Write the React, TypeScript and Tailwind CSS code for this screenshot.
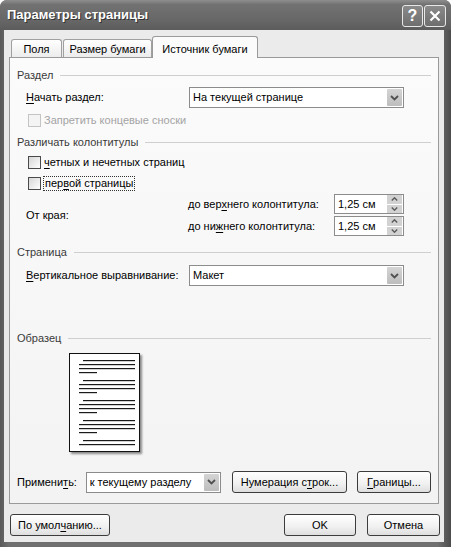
import React from "react";

const U = ({ children }: { children: React.ReactNode }) => (
  <span className="underline underline-offset-[2px] decoration-[1px]">{children}</span>
);

const Chevron = () => (
  <svg width="9" height="6" viewBox="0 0 9 6">
    <path d="M1 1 L4.5 4.5 L8 1" stroke="#505050" strokeWidth="1.8" fill="none" />
  </svg>
);

const Select = ({ text, w }: { text: string; w: string }) => (
  <div className={`flex h-[21px] ${w} items-center justify-between border border-[#8c8c8c] bg-white pl-[3px] pr-[1px]`}>
    <span className="text-black">{text}</span>
    <div className="flex h-[17px] w-[15px] items-center justify-center rounded-[1px] bg-[linear-gradient(to_bottom,#d4d4d4,#bdbdbd)]">
      <Chevron />
    </div>
  </div>
);

const Spin = () => (
  <div className="flex h-[20px] w-[70px] items-center justify-between border border-[#8c8c8c] bg-white pl-[3px] pr-[1px]">
    <span>1,25 см</span>
    <div className="flex h-[18px] w-[15px] flex-col gap-[1px]">
      <div className="flex flex-1 items-center justify-center bg-[#d2d2d2]">
        <svg width="7" height="4" viewBox="0 0 7 4">
          <path d="M0.8 3.5 L3.5 0.8 L6.2 3.5" stroke="#5a5a5a" strokeWidth="1.4" fill="none" />
        </svg>
      </div>
      <div className="flex flex-1 items-center justify-center bg-[#d2d2d2]">
        <svg width="7" height="4" viewBox="0 0 7 4">
          <path d="M0.8 0.5 L3.5 3.2 L6.2 0.5" stroke="#5a5a5a" strokeWidth="1.4" fill="none" />
        </svg>
      </div>
    </div>
  </div>
);

const Check = ({ disabled }: { disabled?: boolean }) => (
  <span
    className={
      disabled
        ? "h-[13px] w-[13px] shrink-0 border border-[#c4c4c4] bg-[#f4f4f4]"
        : "h-[13px] w-[13px] shrink-0 border border-[#4a4a4a] bg-[linear-gradient(135deg,#d6d6d6,#ffffff)]"
    }
  />
);

const Header = ({ text, mt }: { text: string; mt: string }) => (
  <div className={`flex h-[14px] items-center ${mt}`}>
    <span className="text-[#3a3a3a]">{text}</span>
    <div className="ml-[7px] h-0 flex-1 border-t border-[#cfcfcf]" />
  </div>
);

const Btn = ({ children, w }: { children: React.ReactNode; w: string }) => (
  <div
    className={`flex h-[22px] ${w} items-center justify-center rounded-[3px] border border-[#3c3c3c] bg-[linear-gradient(to_bottom,#ffffff,#f0f0f0_60%,#dedede)] text-black`}
  >
    {children}
  </div>
);

const Preview = () => {
  const paras = [6, 26, 46, 66];
  return (
    <div className="ml-[52px] mt-[8px] h-[99px] w-[71px] border border-[#111] bg-white shadow-[2px_2px_2px_#8a8a8a]">
      <svg width="69" height="97" viewBox="0 0 69 97">
        {paras.map((y) => (
          <g key={y} fill="#1a1a1a">
            <rect x="13" y={y} width="52" height="1.2" />
            <rect x="9" y={y + 4} width="56" height="1.2" />
            <rect x="9" y={y + 8} width="56" height="1.2" />
            <rect x="9" y={y + 12} width="18" height="1.2" />
          </g>
        ))}
        <g fill="#1a1a1a">
          <rect x="13" y="86" width="52" height="1.2" />
          <rect x="9" y="90" width="56" height="1.2" />
        </g>
      </svg>
    </div>
  );
};

export default function App() {
  return (
    <div className="h-[547px] w-[451px] bg-white font-['Liberation_Sans',Arial,sans-serif] text-[11px] text-black">
      <div className="flex h-full flex-col rounded-t-[7px] bg-[linear-gradient(to_right,#5a5a5a,#707070_2%,#707070_97%,#4c4c4c)]">
        {/* Title bar */}
        <div className="flex h-[30px] items-center justify-between rounded-t-[7px] bg-[linear-gradient(to_bottom,#8e8e8e,#727272_15%,#666666_70%,#5c5c5c)] pl-[7px] pr-[5px]">
          <span className="text-[13px] font-bold text-white [text-shadow:1px_1px_0_#333]">Параметры страницы</span>
          <div className="flex gap-[1px] pt-[1px]">
            <div className="flex h-[22px] w-[21px] items-center justify-center rounded-[3px] border border-[#e8e8e8] bg-[linear-gradient(to_bottom,#8a8a8a,#6e6e6e)] text-[16px] font-bold text-white">
              ?
            </div>
            <div className="flex h-[22px] w-[22px] items-center justify-center rounded-[3px] border border-[#e8e8e8] bg-[linear-gradient(to_bottom,#8a8a8a,#6e6e6e)]">
              <svg width="12" height="12" viewBox="0 0 12 12">
                <path d="M1.5 1.5 L10.5 10.5 M10.5 1.5 L1.5 10.5" stroke="white" strokeWidth="2.2" />
              </svg>
            </div>
          </div>
        </div>

        {/* Body */}
        <div className="ml-[4px] mr-[7px] mb-[5px] flex flex-1 flex-col bg-[#ebebeb] px-[5px] pt-[6px]">
          {/* Tabs */}
          <div className="flex h-[21px] items-end pl-[2px]">
            <div className="flex h-[18px] w-[51px] items-center justify-center rounded-t-[3px] border border-b-0 border-[#a0a0a0] bg-[linear-gradient(to_bottom,#ffffff,#ececec)] pt-[1px]">
              Поля
            </div>
            <div className="ml-[1px] flex h-[18px] w-[89px] items-center justify-center rounded-t-[3px] border border-b-0 border-[#a0a0a0] bg-[linear-gradient(to_bottom,#ffffff,#ececec)] pt-[1px]">
              Размер бумаги
            </div>
            <div className="relative z-10 -mb-[1px] flex h-[22px] w-[106px] items-start justify-center rounded-t-[3px] border border-b-0 border-[#9a9a9a] bg-[#fbfbfb] pt-[4px]">
              Источник бумаги
            </div>
          </div>

          {/* Panel */}
          <div className="flex h-[447px] flex-col border border-[#9a9a9a] bg-[linear-gradient(to_bottom,#fbfbfb,#f3f3f3)] px-[7px]">
            <Header text="Раздел" mt="mt-[10px]" />
            <div className="mt-[5px] flex h-[21px] items-center pl-[9px]">
              <span className="w-[163px]">
                <U>Н</U>ачать раздел:
              </span>
              <Select text="На текущей странице" w="w-[215px]" />
            </div>
            <div className="mt-[5px] flex h-[14px] items-center gap-[3px] pl-[11px] text-[#a4a4a4]">
              <Check disabled />
              <span>Запретить концевые сноски</span>
            </div>

            <Header text="Различать колонтитулы" mt="mt-[8px]" />
            <div className="mt-[6px] flex h-[14px] items-center gap-[3px] pl-[11px]">
              <Check />
              <span>
                <U>ч</U>етных и нечетных страниц
              </span>
            </div>
            <div className="mt-[7px] flex h-[14px] items-center gap-[2px] pl-[11px]">
              <Check />
              <span className="border border-dotted border-[#333] px-[1px] leading-[13px]">
                пер<U>в</U>ой страницы
              </span>
            </div>

            <div className="mt-[4px] flex h-[42px] items-center pl-[9px]">
              <span className="w-[162px]">От края:</span>
              <div className="flex flex-col gap-[2px]">
                <div className="flex h-[20px] items-center">
                  <span className="w-[146px]">
                    до вер<U>х</U>него колонтитула:
                  </span>
                  <Spin />
                </div>
                <div className="flex h-[20px] items-center">
                  <span className="w-[146px]">
                    до ни<U>ж</U>него колонтитула:
                  </span>
                  <Spin />
                </div>
              </div>
            </div>

            <Header text="Страница" mt="mt-[9px]" />
            <div className="mt-[6px] flex h-[21px] items-center pl-[9px]">
              <span className="w-[163px]">
                <U>В</U>ертикальное выравнивание:
              </span>
              <Select text="Макет" w="w-[215px]" />
            </div>

            <Header text="Образец" mt="mt-[45px]" />
            <Preview />

            <div className="mt-[19px] flex h-[22px] items-center">
              <span className="w-[69px]">
                Примени<U>т</U>ь:
              </span>
              <Select text="к текущему разделу" w="w-[136px]" />
              <div className="ml-[11px]">
                <Btn w="w-[115px]">
                  Нумерация с<U>т</U>рок...
                </Btn>
              </div>
              <div className="ml-[10px]">
                <Btn w="w-[74px]">
                  <U>Г</U>раницы...
                </Btn>
              </div>
            </div>
          </div>

          {/* Bottom buttons */}
          <div className="mt-[10px] flex items-center pl-[1px]">
            <Btn w="w-[100px]">
              По умол<U>ч</U>анию...
            </Btn>
            <div className="flex-1" />
            <Btn w="w-[72px]">OK</Btn>
            <div className="ml-[11px] -mr-[1px]">
              <Btn w="w-[73px]">Отмена</Btn>
            </div>
          </div>
        </div>
      </div>
    </div>
  );
}
